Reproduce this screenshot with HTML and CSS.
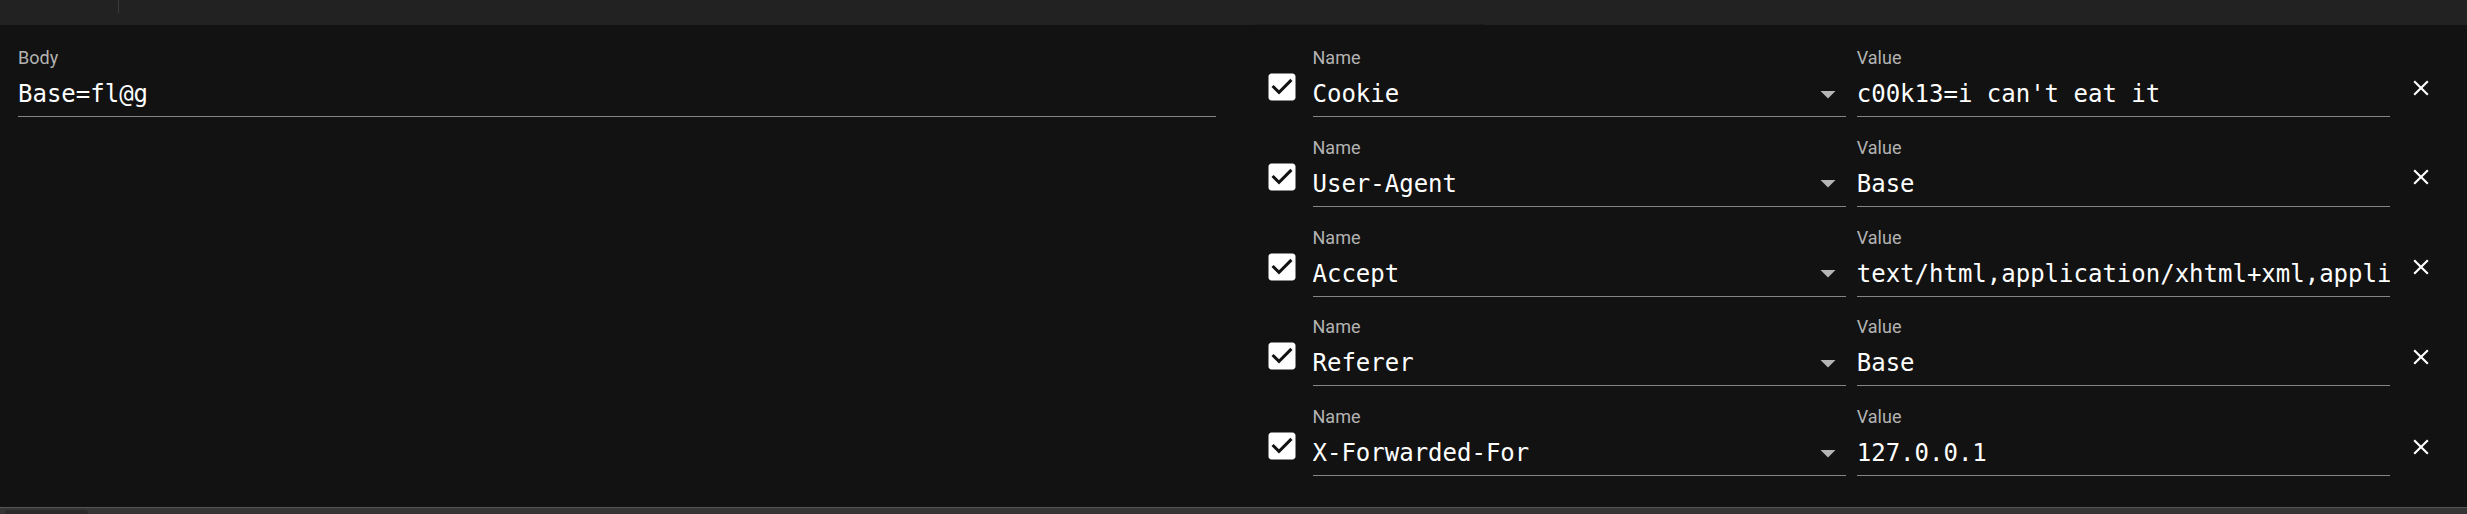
FILE: index.html
```html
<!DOCTYPE html>
<html lang="en">
<head>
<meta charset="utf-8">
<title>Request editor</title>
<link rel="stylesheet" href="styles.css">
</head>
<body>
<div class="app">
  <div class="topbar">
    <div class="tb-tab"></div>
    <div class="tb-strip"></div>
  </div>
  <div class="main">
    <section class="left">
      <div class="field">
        <div class="label">Body</div>
        <div class="input">Base=fl@g</div>
      </div>
    </section>
    <section class="headers">
      <div class="row">
        <div class="check"><svg viewBox="0 0 24 24" width="36" height="36"><path d="M19 3H5c-1.11 0-2 .9-2 2v14c0 1.1.89 2 2 2h14c1.11 0 2-.9 2-2V5c0-1.1-.89-2-2-2zm-9 14l-5-5 1.41-1.41L10 14.17l7.59-7.59L19 8l-9 9z"/></svg></div>
        <div class="field"><div class="label">Name</div><div class="input select"><span class="val">Cookie</span><svg class="arrow" viewBox="0 0 24 24" width="36" height="36"><path d="M7 10l5 5 5-5z"/></svg></div></div>
        <div class="field"><div class="label">Value</div><div class="input"><span class="val">c00k13=i can't eat it</span></div></div>
        <div class="close"><svg viewBox="0 0 24 24" width="26" height="26"><path d="M19 6.41 17.59 5 12 10.59 6.41 5 5 6.41 10.59 12 5 17.59 6.41 19 12 13.41 17.59 19 19 17.59 13.41 12z"/></svg></div>
      </div>
      <div class="row">
        <div class="check"><svg viewBox="0 0 24 24" width="36" height="36"><path d="M19 3H5c-1.11 0-2 .9-2 2v14c0 1.1.89 2 2 2h14c1.11 0 2-.9 2-2V5c0-1.1-.89-2-2-2zm-9 14l-5-5 1.41-1.41L10 14.17l7.59-7.59L19 8l-9 9z"/></svg></div>
        <div class="field"><div class="label">Name</div><div class="input select"><span class="val">User-Agent</span><svg class="arrow" viewBox="0 0 24 24" width="36" height="36"><path d="M7 10l5 5 5-5z"/></svg></div></div>
        <div class="field"><div class="label">Value</div><div class="input"><span class="val">Base</span></div></div>
        <div class="close"><svg viewBox="0 0 24 24" width="26" height="26"><path d="M19 6.41 17.59 5 12 10.59 6.41 5 5 6.41 10.59 12 5 17.59 6.41 19 12 13.41 17.59 19 19 17.59 13.41 12z"/></svg></div>
      </div>
      <div class="row">
        <div class="check"><svg viewBox="0 0 24 24" width="36" height="36"><path d="M19 3H5c-1.11 0-2 .9-2 2v14c0 1.1.89 2 2 2h14c1.11 0 2-.9 2-2V5c0-1.1-.89-2-2-2zm-9 14l-5-5 1.41-1.41L10 14.17l7.59-7.59L19 8l-9 9z"/></svg></div>
        <div class="field"><div class="label">Name</div><div class="input select"><span class="val">Accept</span><svg class="arrow" viewBox="0 0 24 24" width="36" height="36"><path d="M7 10l5 5 5-5z"/></svg></div></div>
        <div class="field"><div class="label">Value</div><div class="input"><span class="val">text/html,application/xhtml+xml,application/xml;q=0.9,image/avif,image/webp,image/apng,*/*;q=0.8</span></div></div>
        <div class="close"><svg viewBox="0 0 24 24" width="26" height="26"><path d="M19 6.41 17.59 5 12 10.59 6.41 5 5 6.41 10.59 12 5 17.59 6.41 19 12 13.41 17.59 19 19 17.59 13.41 12z"/></svg></div>
      </div>
      <div class="row">
        <div class="check"><svg viewBox="0 0 24 24" width="36" height="36"><path d="M19 3H5c-1.11 0-2 .9-2 2v14c0 1.1.89 2 2 2h14c1.11 0 2-.9 2-2V5c0-1.1-.89-2-2-2zm-9 14l-5-5 1.41-1.41L10 14.17l7.59-7.59L19 8l-9 9z"/></svg></div>
        <div class="field"><div class="label">Name</div><div class="input select"><span class="val">Referer</span><svg class="arrow" viewBox="0 0 24 24" width="36" height="36"><path d="M7 10l5 5 5-5z"/></svg></div></div>
        <div class="field"><div class="label">Value</div><div class="input"><span class="val">Base</span></div></div>
        <div class="close"><svg viewBox="0 0 24 24" width="26" height="26"><path d="M19 6.41 17.59 5 12 10.59 6.41 5 5 6.41 10.59 12 5 17.59 6.41 19 12 13.41 17.59 19 19 17.59 13.41 12z"/></svg></div>
      </div>
      <div class="row">
        <div class="check"><svg viewBox="0 0 24 24" width="36" height="36"><path d="M19 3H5c-1.11 0-2 .9-2 2v14c0 1.1.89 2 2 2h14c1.11 0 2-.9 2-2V5c0-1.1-.89-2-2-2zm-9 14l-5-5 1.41-1.41L10 14.17l7.59-7.59L19 8l-9 9z"/></svg></div>
        <div class="field"><div class="label">Name</div><div class="input select"><span class="val">X-Forwarded-For</span><svg class="arrow" viewBox="0 0 24 24" width="36" height="36"><path d="M7 10l5 5 5-5z"/></svg></div></div>
        <div class="field"><div class="label">Value</div><div class="input"><span class="val">127.0.0.1</span></div></div>
        <div class="close"><svg viewBox="0 0 24 24" width="26" height="26"><path d="M19 6.41 17.59 5 12 10.59 6.41 5 5 6.41 10.59 12 5 17.59 6.41 19 12 13.41 17.59 19 19 17.59 13.41 12z"/></svg></div>
      </div>
    </section>
  </div>
  <div class="footer">
    <div class="ft-tab"></div>
  </div>
</div>
</body>
</html>
```

FILE: styles.css
```css
* { box-sizing: border-box; }
html, body { margin: 0; padding: 0; }
body {
  background: #121212;
  width: 2467px;
  height: 514px;
  overflow: hidden;
  font-family: Roboto, "Liberation Sans", sans-serif;
}
.app {
  display: flex;
  flex-direction: column;
  height: 514px;
}
.topbar {
  height: 25px;
  flex: none;
  background: #222222;
  display: flex;
  align-items: flex-start;
}
.tb-tab {
  width: 119px;
  height: 13px;
  border-right: 1px solid #3a3a3a;
}
.tb-strip {
  align-self: flex-end;
  margin-left: 1136px;
  width: 230px;
  height: 1px;
  background: #1b1b1b;
  border-radius: 1px;
}
.main {
  flex: 1;
  display: grid;
  grid-template-columns: minmax(0, 1fr) minmax(0, 1fr);
  padding-top: 21px;
}
.left {
  padding: 0 18px;
  min-width: 0;
}
.headers {
  padding: 0 16px;
  min-width: 0;
  display: flex;
  flex-direction: column;
  gap: 18.75px;
}
.row {
  display: flex;
  align-items: flex-start;
}
.check {
  width: 63px;
  flex: none;
  padding-left: 14.5px;
  padding-top: 23px;
}
.check svg { display: block; fill: #ffffff; }
.field {
  flex: 1 1 0;
  min-width: 0;
  display: flex;
  flex-direction: column;
}
.row .field + .field { margin-left: 11px; }
.label {
  font-size: 18px;
  line-height: 24px;
  height: 24px;
  color: #b3b3b3;
}
.input {
  font-family: "DejaVu Sans Mono", "Liberation Mono", monospace;
  font-size: 24px;
  line-height: 36px;
  height: 47px;
  padding: 6px 0 4px;
  color: #ffffff;
  border-bottom: 1px solid #858585;
  white-space: nowrap;
  overflow: hidden;
  display: flex;
  align-items: center;
}
.input .val {
  flex: 1 1 0;
  min-width: 0;
  overflow: hidden;
}
.select .arrow {
  flex: none;
  display: block;
  fill: #b5b5b5;
  margin-top: -1px;
}
.close {
  width: 61px;
  flex: none;
  display: flex;
  justify-content: center;
  padding-top: 28.5px;
}
.close svg { display: block; fill: #ffffff; }
.footer {
  height: 7px;
  flex: none;
  background: #353535;
  border-top: 1px solid #555555;
  padding: 2px 0 0 5px;
}
.ft-tab {
  width: 83px;
  height: 4px;
  background: #2a2a2a;
  border-radius: 3px 3px 0 0;
}
```
